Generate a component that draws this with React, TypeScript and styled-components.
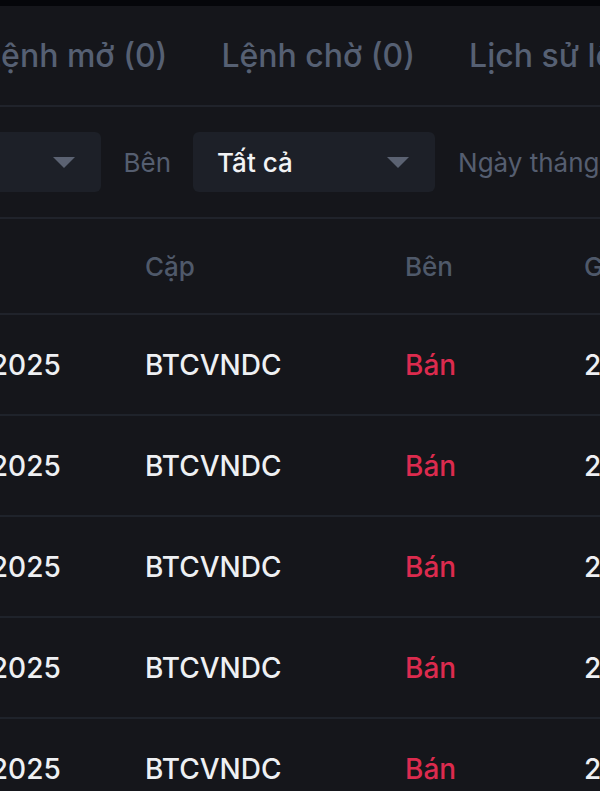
import React from "react";
import styled, { createGlobalStyle } from "styled-components";

const Global = createGlobalStyle`
  html, body { margin: 0; padding: 0; background: #ffffff; }
  body { font-family: Inter, "Noto Sans", "Liberation Sans", sans-serif; }
  * { box-sizing: border-box; }
`;

const Frame = styled.div`
  width: 600px;
  height: 791px;
  overflow: hidden;
  background: #15161b;
  border-top: 6px solid #05060a;
`;

const Scroller = styled.div<{ $offset: number }>`
  margin-left: ${(p) => -p.$offset}px;
  width: 1500px;
`;

const Tabs = styled.div`
  display: flex;
  align-items: center;
  gap: 54px;
  height: 101px;
  border-bottom: 2px solid #20232b;
`;

const Tab = styled.div<{ $first?: boolean }>`
  font-size: 32px;
  font-weight: 500;
  color: #566073;
  white-space: nowrap;
  margin-left: ${(p) => (p.$first ? "218px" : "0")};
`;

const Filters = styled.div`
  display: flex;
  align-items: center;
  height: 112px;
  border-bottom: 2px solid #20232b;
`;

const Select = styled.div<{ $w: number }>`
  width: ${(p) => p.$w}px;
  height: 60px;
  border-radius: 6px;
  background: #1d2028;
  display: flex;
  align-items: center;
  justify-content: space-between;
  padding: 0 26px 0 24px;
`;

const SelectValue = styled.span`
  font-size: 26px;
  font-weight: 500;
  color: #f2f3f5;
`;

const Caret = styled.span`
  width: 0;
  height: 0;
  border-left: 11px solid transparent;
  border-right: 11px solid transparent;
  border-top: 11px solid #5b6272;
`;

const FilterLabel = styled.span`
  font-size: 26px;
  color: #555e70;
  padding: 0 22px 0 23px;
  white-space: nowrap;
`;

const Cols = "380px 260px 179px 300px";

const HeadRow = styled.div`
  display: grid;
  grid-template-columns: ${Cols};
  align-items: center;
  height: 96px;
  border-bottom: 2px solid #20232b;
`;

const HeadCell = styled.div<{ $lead?: boolean }>`
  font-size: 26px;
  font-weight: 500;
  color: #4f596a;
  white-space: nowrap;
  padding-left: ${(p) => (p.$lead ? "139px" : "0")};
`;

const Row = styled.div`
  display: grid;
  grid-template-columns: ${Cols};
  align-items: center;
  height: 101px;
  border-bottom: 2px solid #1f232b;
`;

const Cell = styled.div<{ $side?: boolean; $lead?: boolean }>`
  font-size: 28px;
  font-weight: 500;
  color: ${(p) => (p.$side ? "#dc2b4e" : "#eef0f3")};
  white-space: nowrap;
  padding-left: ${(p) => (p.$lead ? "139px" : "0")};
`;

const rows = [0, 1, 2, 3, 4];

export default function App() {
  return (
    <>
      <Global />
      <Frame>
        <Scroller $offset={235}>
          <Tabs>
            <Tab $first>Lệnh mở (0)</Tab>
            <Tab>Lệnh chờ (0)</Tab>
            <Tab>Lịch sử lệnh</Tab>
            <Tab>Lịch sử giao dịch</Tab>
          </Tabs>
          <Filters>
            <FilterLabel>Cặp</FilterLabel>
            <Select $w={241}>
              <SelectValue>Tất cả</SelectValue>
              <Caret />
            </Select>
            <FilterLabel>Bên</FilterLabel>
            <Select $w={242}>
              <SelectValue>Tất cả</SelectValue>
              <Caret />
            </Select>
            <FilterLabel>Ngày tháng</FilterLabel>
          </Filters>
          <HeadRow>
            <HeadCell $lead>Ngày</HeadCell>
            <HeadCell>Cặp</HeadCell>
            <HeadCell>Bên</HeadCell>
            <HeadCell>Giá</HeadCell>
          </HeadRow>
          {rows.map((i) => (
            <Row key={i}>
              <Cell $lead>10/04/2025</Cell>
              <Cell>BTCVNDC</Cell>
              <Cell $side>Bán</Cell>
              <Cell>2.150.000.000</Cell>
            </Row>
          ))}
        </Scroller>
      </Frame>
    </>
  );
}
